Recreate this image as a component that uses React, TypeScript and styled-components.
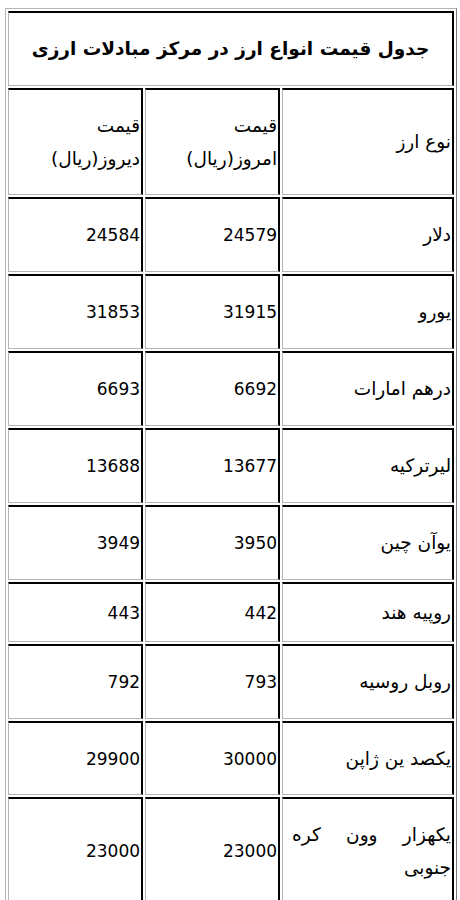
import React from "react";
import styled, { createGlobalStyle } from "styled-components";

const Global = createGlobalStyle`
  html, body { margin: 0; padding: 0; background: #ffffff; }
  body { font-family: "DejaVu Sans", "Noto Sans", sans-serif; color: #000; }
`;

const Page = styled.div`
  padding: 8px 0 0 5px;
`;

const Table = styled.table`
  width: 450px;
  border-collapse: separate;
  border-spacing: 2px;
  border-style: solid;
  border-width: 1px;
  border-color: #b4b4b4 #7a7a7a #7a7a7a #b4b4b4;
  table-layout: fixed;
  direction: rtl;
  font-size: 17px;
`;

const Cell = styled.td<{ $h?: number; $center?: boolean; $text?: boolean }>`
  box-sizing: border-box;
  height: ${(p) => (p.$h ? `${p.$h}px` : "auto")};
  padding: 0 1px;
  border-style: solid;
  border-width: 2px 2px 1px 1px;
  border-color: #000 #000 #b4b4b4 #b4b4b4;
  vertical-align: middle;
  text-align: ${(p) => (p.$center ? "center" : "right")};
  font-size: ${(p) => (p.$text ? "18.5px" : "17px")};
  line-height: 22px;
`;

const TitleCell = styled(Cell)`
  font-weight: bold;
  font-size: 18.5px;
`;

const HeadText = styled.div`
  line-height: 33px;
`;

const WonText = styled.div`
  line-height: 33px;
  text-align: justify;
  padding-left: 8px;
`;

type Row = { name: string; today: string; yesterday: string; h: number };

const rows: Row[] = [
  { name: "دلار", today: "24579", yesterday: "24584", h: 75 },
  { name: "یورو", today: "31915", yesterday: "31853", h: 75 },
  { name: "درهم امارات", today: "6692", yesterday: "6693", h: 75 },
  { name: "لیرترکیه", today: "13677", yesterday: "13688", h: 75 },
  { name: "یوآن چین", today: "3950", yesterday: "3949", h: 75 },
  { name: "روپیه هند", today: "442", yesterday: "443", h: 60 },
  { name: "روبل روسیه", today: "793", yesterday: "792", h: 75 },
  { name: "یکصد ین ژاپن", today: "30000", yesterday: "29900", h: 74 },
];

export default function App() {
  return (
    <>
      <Global />
      <Page>
        <Table>
          <colgroup>
            <col style={{ width: 172 }} />
            <col style={{ width: 135 }} />
            <col style={{ width: 135 }} />
          </colgroup>
          <tbody>
            <tr>
              <TitleCell colSpan={3} $h={75} $center>
                جدول قیمت انواع ارز در مرکز مبادلات ارزی
              </TitleCell>
            </tr>
            <tr>
              <Cell $h={107} $text>نوع ارز</Cell>
              <Cell $h={107} $text>
                <HeadText>
                  قیمت
                  <br />
                  امروز(ریال)
                </HeadText>
              </Cell>
              <Cell $h={107} $text>
                <HeadText>
                  قیمت
                  <br />
                  دیروز(ریال)
                </HeadText>
              </Cell>
            </tr>
            {rows.map((r) => (
              <tr key={r.name}>
                <Cell $h={r.h} $text>{r.name}</Cell>
                <Cell $h={r.h}>{r.today}</Cell>
                <Cell $h={r.h}>{r.yesterday}</Cell>
              </tr>
            ))}
            <tr>
              <Cell $h={107} $text>
                <WonText>یکهزار وون کره جنوبی</WonText>
              </Cell>
              <Cell $h={107}>23000</Cell>
              <Cell $h={107}>23000</Cell>
            </tr>
          </tbody>
        </Table>
      </Page>
    </>
  );
}
